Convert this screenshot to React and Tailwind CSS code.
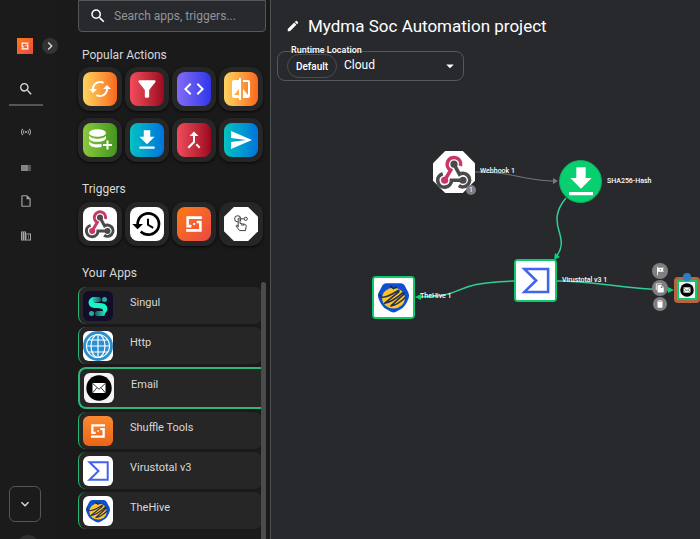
import React from "react";
import {
  MdSearch, MdEdit, MdFilterAlt, MdCode, MdCompare, MdCallMerge, MdSend,
  MdDownload, MdOutlineInsertDriveFile, MdBusiness, MdHistory, MdSensors,
  MdArrowDropDown, MdKeyboardArrowDown, MdKeyboardArrowRight, MdFileCopy,
  MdDelete, MdTour, MdCached,
} from "react-icons/md";

function ShuffleMark({ className }) {
  return (
    <svg viewBox="0 0 24 24" className={className} fill="none" stroke="#fff" strokeWidth="3.4">
      <path d="M22.500 3.500H3.500V14.800H8.500" />
      <path d="M1.500 20.500h19V9.200H15.500" />
      <path d="M10.900 12h2.600" strokeWidth="2.600" />
    </svg>
  );
}

function WebhookMark({ className }) {
  return (
    <svg viewBox="0 0 48 48" className={className} fill="none" strokeWidth="4.8">
      <path d="M9 26.200A9.200 9.200 0 1 0 20.700 35H35" stroke="#4a4a4a" />
      <path d="M24 13.500L31.300 27A9 9 0 1 1 30.500 42" stroke="#4a4a4a" />
      <path d="M32.600 16A9 9 0 1 0 19.600 21.500L11.500 35" stroke="#c9376a" />
      <circle cx="24" cy="13.500" r="4.800" fill="#4a4a4a" />
      <circle cx="36" cy="35" r="4.800" fill="#4a4a4a" />
      <circle cx="11.500" cy="35" r="4.800" fill="#c9376a" />
    </svg>
  );
}

function DatabasePlus({ className }) {
  return (
    <svg viewBox="0 0 24 24" className={className} fill="#fff">
      <ellipse cx="9.5" cy="5" rx="8.5" ry="3.8" />
      <path d="M1 7.5c1 2.5 5 3.2 8.500 3.200S17 10 18 7.500v3c-1 2.500-5 3.300-8.500 3.300S2 13 1 10.500z" />
      <path d="M1 13c1 2.500 5 3.300 8.500 3.300 1.500 0 3-.100 4-.400v3.200c-1.200.300-2.600.400-4 .400C6 19.500 2 18.500 1 16z" />
      <path d="M18.500 12.500h2v3.500H24v2h-3.500v3.500h-2V18H15v-2h3.500z" />
    </svg>
  );
}

function TouchMark({ className }) {
  return (
    <svg viewBox="0 0 34 34" className={className} fill="none" stroke="#333" strokeWidth="1">
      <circle cx="13.500" cy="11.500" r="3.300" />
      <circle cx="22" cy="11.500" r="1.700" />
      <path d="M17 11.500h3" />
      <path d="M14 20v-8.500c0-1.300 2-1.300 2 0v5l5 .800c1.200.300 1.700 1 1.500 2.200l-.800 4.500h-6.200l-3.500-4.500c-.600-1 .600-1.700 1.300-1z" fill="#fff" />
      <path d="M18 17v2M20 17.300V19" />
    </svg>
  );
}

function SingulMark({ className }) {
  return (
    <svg viewBox="0 0 30 30" className={className}>
      <defs>
        <linearGradient id="singul-top"><stop stopColor="#1fe8c0" /><stop offset="1" stopColor="#145a5c" /></linearGradient>
        <linearGradient id="singul-low"><stop stopColor="#145a5c" /><stop offset="1" stopColor="#1fe8c0" /></linearGradient>
      </defs>
      <rect width="30" height="30" fill="#120e2a" />
      <rect x="8" y="6" width="10" height="5" rx="2.500" fill="url(#singul-top)" />
      <circle cx="21.500" cy="8.500" r="2.500" fill="#1fae9c" />
      <path d="M10 6.300C4.500 7.300 4 14.500 9 16.500c3 1.300 7 .300 9.500 1.300 2 .800 2 3.200 1 5.500 6-.800 6.500-8.500 1.500-10.500-3-1.200-7-.200-10-1.500-2-1-2-3-1-5z" fill="#19f5c4" />
      <rect x="12" y="20" width="10" height="5" rx="2.500" fill="url(#singul-low)" />
      <circle cx="8.500" cy="22.500" r="2.500" fill="#1fae9c" />
    </svg>
  );
}

function GlobeMark({ className }) {
  return (
    <svg viewBox="0 0 30 30" className={className} fill="none" stroke="#fff" strokeWidth="1.200">
      <rect width="30" height="30" fill="#fff" stroke="none" />
      <circle cx="15" cy="15" r="15" fill="#2b8fd0" stroke="none" />
      <circle cx="15" cy="15" r="11.500" />
      <ellipse cx="15" cy="15" rx="7" ry="11.500" />
      <path d="M3.500 15h23M5.500 9h19M5.500 21h19M15 3.500v23" />
    </svg>
  );
}

function EnvelopeMark({ className }) {
  return (
    <svg viewBox="0 0 30 30" className={className}>
      <rect width="30" height="30" fill="#f4f4f4" />
      <circle cx="15" cy="15" r="12.700" fill="#000" />
      <rect x="8.500" y="10" width="13" height="10" fill="#fff" />
      <path d="M8.500 10.300l6.500 6 6.500-6M8.500 20l4.500-5.300M21.500 20L17 14.700" fill="none" stroke="#222" strokeWidth=".9" />
    </svg>
  );
}

function VirustotalMark({ className }) {
  return (
    <svg viewBox="0 0 30 30" className={className}>
      <rect width="30" height="30" fill="#fff" />
      <path d="M6.500 6.200h18.200v17.600H6.500L15.500 15z" fill="none" stroke="#4164f0" strokeWidth="2" />
    </svg>
  );
}

function HiveMark({ className }) {
  return (
    <svg viewBox="0 0 30 30" className={className}>
      <rect width="30" height="30" fill="#fff" />
      <path d="M9.500 4h11c1.500 0 2.500.700 3.200 2l2.600 5c.8 1.700.8 3.300.2 5-1 2.600-2.500 5.500-4.500 7l-5 3c-1.300.6-2.700.6-4 0l-5-3c-2-1.500-3.500-4.400-4.500-7-.6-1.700-.6-3.300.2-5l2.600-5C7 4.700 8 4 9.500 4z" fill="#0d4fd0" />
      <ellipse cx="15" cy="15.500" rx="8.700" ry="8" fill="#fcc42c" />
      <path d="M5.500 14.500c2.500 1 8.500-2 12.500-4.500M8 19.500c3.500-.5 9.500-4 14-8M13 21.500c3.500-.5 7.500-3 11-6.500M5.500 14.500L4 12.500M18 10c1-.8 1.600-.6 1 .7L8 19.500M22 11.500c1.200-.5 1.500.3.600 1.300L13 21.500" fill="none" stroke="#26304a" strokeWidth="1.200" strokeLinecap="round" />
      <path d="M12.500 6l2.500 2.200L17.500 7" fill="none" stroke="#1b2540" strokeWidth="1.200" />
    </svg>
  );
}

function DownloadMark({ className }) {
  return (
    <svg viewBox="0 0 24 24" className={className} fill="#fff">
      <path d="M8.500 1h7v8H20l-8 8-8-8h4.500zM3 19.500h18v2.500H3z" />
    </svg>
  );
}

const actions = [
  { label: "Repeat", tint: "from-[#fbd45e] to-[#f8671c]", icon: <MdCached className="size-6" /> },
  { label: "Filter", tint: "from-[#f34c5c] to-[#9c0620]", icon: <MdFilterAlt className="size-[26px]" /> },
  { label: "Code", tint: "from-[#836af5] to-[#3034ea]", icon: <MdCode className="size-6" /> },
  { label: "Compare", tint: "from-[#fbd45e] to-[#f8671c]", icon: <MdCompare className="size-6" /> },
  { label: "Store", tint: "from-[#89c93c] to-[#459420]", icon: <DatabasePlus className="size-6" /> },
  { label: "Download", tint: "from-[#0cc2c0] to-[#0871dc]", icon: <MdDownload className="size-[26px]" /> },
  { label: "Merge", tint: "from-[#f34c5c] to-[#9c0620]", icon: <MdCallMerge className="size-6" /> },
  { label: "Send", tint: "from-[#0cc2c0] to-[#0871dc]", icon: <MdSend className="size-6" /> },
];

const triggers = [
  { label: "Webhook", look: "rounded-lg bg-white", icon: <WebhookMark className="size-[30px]" /> },
  { label: "Schedule", look: "rounded-lg bg-white text-black", icon: <MdHistory className="size-8 shrink-0" /> },
  { label: "Subflow", look: "rounded-lg bg-linear-to-br from-[#ff7a00] to-[#e8483f]", icon: <ShuffleMark className="size-[18px]" /> },
  { label: "User input", look: "bg-white [clip-path:polygon(29%_0,71%_0,100%_29%,100%_71%,71%_100%,29%_100%,0_71%,0_29%)]", icon: <TouchMark className="size-8" /> },
];

const apps = [
  { name: "Singul", icon: <SingulMark className="size-full" /> },
  { name: "Http", icon: <GlobeMark className="size-full" /> },
  { name: "Email", icon: <EnvelopeMark className="size-full" />, selected: true },
  { name: "Shuffle Tools", icon: <span className="flex size-full items-center justify-center bg-linear-to-b from-[#fb8a30] to-[#ea6418]"><ShuffleMark className="size-4" /></span> },
  { name: "Virustotal v3", icon: <VirustotalMark className="size-full" /> },
  { name: "TheHive", icon: <HiveMark className="size-full" /> },
];

function Tile({ label, children }) {
  return (
    <button type="button" aria-label={label} className="flex size-11 items-center justify-center rounded-xl bg-[#262626] shadow-sm shadow-black/60">
      {children}
    </button>
  );
}

function Rail() {
  return (
    <nav className="flex w-[54px] shrink-0 flex-col items-center bg-[#1b1b1b] pr-0.5 text-[#a4a4a4]">
      <div className="mt-[38px] flex w-full items-center pl-[17px]">
        <span className="flex size-4 shrink-0 items-center justify-center bg-linear-to-br from-[#ff7a00] to-[#e8483f]">
          <ShuffleMark className="size-2" />
        </span>
        <button type="button" aria-label="Expand menu" className="relative z-10 -mr-4 ml-[9px] flex size-4 shrink-0 items-center justify-center rounded-full bg-[#333] text-[#ddd]">
          <MdKeyboardArrowRight className="size-4 shrink-0" />
        </button>
      </div>
      <button type="button" aria-label="Search" className="mt-[27px] flex h-[25px] w-[34px] justify-center border-b-2 border-[#555] text-[#ddd]">
        <MdSearch className="size-4" />
      </button>
      <button type="button" aria-label="Live" className="mt-5"><MdSensors className="size-3" /></button>
      <button type="button" aria-label="Dashboard" className="mt-6">
        <svg viewBox="0 0 12 12" className="size-3"><rect x="1" y="3" width="7" height="6" fill="#858585" /><rect x="8" y="3" width="3" height="6" fill="#555" /></svg>
      </button>
      <button type="button" aria-label="Documents" className="mt-5"><MdOutlineInsertDriveFile className="size-[14px]" /></button>
      <button type="button" aria-label="Organization" className="mt-[22px]"><MdBusiness className="size-3" /></button>
      <button type="button" aria-label="More" className="mt-auto mr-0.5 flex h-9 w-8 shrink-0 items-center justify-center rounded-md border border-[#555] text-[#ddd]">
        <MdKeyboardArrowDown className="size-4" />
      </button>
      <div className="mt-[13px] -mb-5 ml-1 size-6 shrink-0 rounded-full bg-[#303030]" />
    </nav>
  );
}

function AppsPanel() {
  return (
    <aside className="flex w-[217px] shrink-0 flex-col border-r border-[#505153] bg-[#1a1a1a] pl-6 text-xs text-[#d8d8d8]">
      <label className="flex h-8 w-[188px] shrink-0 items-center gap-[7px] rounded-b border border-[#55565a] bg-[#27292d] pl-[10px]">
        <MdSearch className="size-[18px] shrink-0 text-white" />
        <input aria-label="Search apps" placeholder="Search apps, triggers..." className="w-full min-w-0 bg-transparent outline-none placeholder:text-[#929497]" />
      </label>
      <h2 className="mt-[15px] ml-1 h-5 leading-4">Popular Actions</h2>
      <div className="flex w-[188px] flex-wrap gap-x-[3px] gap-y-[7px]">
        {actions.map((a) => (
          <Tile key={a.label} label={a.label}>
            <span className={`flex size-[34px] items-center justify-center rounded-lg bg-linear-to-r text-white ${a.tint}`}>{a.icon}</span>
          </Tile>
        ))}
      </div>
      <h2 className="mt-[19px] ml-1 h-[21px] leading-4">Triggers</h2>
      <div className="flex w-[188px] gap-[3px]">
        {triggers.map((t) => (
          <Tile key={t.label} label={t.label}>
            <span className={`flex size-[34px] items-center justify-center ${t.look}`}>{t.icon}</span>
          </Tile>
        ))}
      </div>
      <h2 className="mt-[19px] ml-1 h-[17px] leading-4">Your Apps</h2>
      <div className="flex min-h-0 w-[188px] flex-1">
        <ul className="flex flex-1 flex-col gap-[3px] overflow-hidden pt-[5px] text-[11px]">
          {apps.map((app) => (
            <li key={app.name} className="-mr-px">
              <button
                type="button"
                className={`flex w-full items-center bg-[#262626] pl-1 text-left ${app.selected ? "h-[42px] rounded-l-lg border-2 border-r-0 border-[#2bb673]" : "h-[37px] rounded-lg border-l border-[#2bb673]"}`}
              >
                <span className="size-[30px] shrink-0 overflow-hidden rounded-md">{app.icon}</span>
                <span className="mb-[5px] ml-[17px]">{app.name}</span>
              </button>
            </li>
          ))}
        </ul>
        <div className="w-[5px] rounded-t bg-[#4b4b4b]" />
      </div>
    </aside>
  );
}

function Edges() {
  return (
    <svg className="absolute inset-0 size-full" fill="none">
      <path d="M203 172C225 172 235 174 245 176S270 181 283 181" stroke="#77797c" />
      <path d="M282 178l5 3-5 3z" fill="#77797c" />
      <g stroke="#2ecf96" strokeWidth="1.500">
        <path d="M295 198C284 211 285 221 288 231S292 248 285 257" />
        <path d="M243 281C175 283 200 296 149 297" />
        <path d="M286 281C325 281 350 289 398 290" />
      </g>
      <g fill="#0ed072">
        <path d="M283 260l1-7 5 4z" />
        <path d="M144 297l6-3v6z" />
        <path d="M403 290l-6-3v6z" />
      </g>
    </svg>
  );
}

function NodeLabel({ className, children }) {
  return <span className={`absolute text-[7px] leading-[10px] font-medium whitespace-nowrap text-white ${className}`}>{children}</span>;
}

function Canvas() {
  return (
    <main className="relative min-w-0 flex-1 overflow-hidden bg-[#27292d] text-white">
      <Edges />
      <header className="flex items-center gap-2 pt-[14px] pl-[15px]">
        <button type="button" aria-label="Rename workflow"><MdEdit className="size-[14px]" /></button>
        <h1 className="text-[17px] leading-6">Mydma Soc Automation project</h1>
      </header>
      <div className="relative mt-[13px] ml-[6px] flex h-[30px] w-[187px] items-center rounded-lg border border-[#55575b] pl-[9px]">
        <label htmlFor="runtime" className="absolute -top-[8px] left-[13px] text-[9px] leading-3 font-medium">Runtime Location</label>
        <span className="flex h-6 w-[50px] shrink-0 items-center justify-center rounded-full border border-[#4b4d51] text-[10px] font-medium">Default</span>
        <select id="runtime" className="h-full flex-1 appearance-none bg-transparent pb-0.5 pl-[7px] text-xs outline-none">
          <option>Cloud</option>
        </select>
        <MdArrowDropDown className="pointer-events-none absolute right-1 size-[18px]" />
      </div>

      <div className="absolute top-[151px] left-[162px] flex size-[42px] items-center justify-center bg-white [clip-path:polygon(29%_0,71%_0,100%_29%,100%_71%,71%_100%,29%_100%,0_71%,0_29%)]">
        <WebhookMark className="size-9" />
      </div>
      <span className="absolute top-[185px] left-[195px] flex size-[10px] items-center justify-center rounded-full bg-[#7d7d7d] text-[7px]">1</span>
      <NodeLabel className="top-[166px] left-[209px]">Webhook 1</NodeLabel>

      <div className="absolute top-[160px] left-[288px] flex size-[43px] items-center justify-center rounded-full border border-[#0fae5e] bg-[#08cf70]">
        <DownloadMark className="size-8" />
      </div>
      <NodeLabel className="top-[176px] left-[336px]">SHA256-Hash</NodeLabel>

      <div className="absolute top-[259px] left-[243px] size-[43px] overflow-hidden rounded border-2 border-[#0ec96d] bg-white">
        <VirustotalMark className="size-full" />
      </div>
      <NodeLabel className="top-[275px] left-[291px]">Virustotal v3 1</NodeLabel>

      <div className="absolute top-[276px] left-[101px] size-[43px] overflow-hidden rounded border-2 border-[#0ec96d] bg-white">
        <HiveMark className="size-full" />
      </div>
      <NodeLabel className="top-[291px] left-[149px]">TheHive 1</NodeLabel>

      <button type="button" aria-label="Set as start" className="absolute top-[263px] left-[381px] flex size-4 items-center justify-center rounded-full bg-[#7f7f7f]"><MdTour className="size-[10px]" /></button>
      <button type="button" aria-label="Copy" className="absolute top-[280px] left-[381px] flex size-4 items-center justify-center rounded-full bg-[#7f7f7f]"><MdFileCopy className="size-[10px]" /></button>
      <button type="button" aria-label="Delete" className="absolute top-[297px] left-[382px] flex size-[14px] items-center justify-center rounded-full bg-[#7f7f7f]"><MdDelete className="size-[10px]" /></button>
      <div className="absolute top-[277px] left-[403px] size-[26px] rounded bg-[#b5653f] p-[3px]">
        <div className="size-full border-2 border-[#0ec96d]"><EnvelopeMark className="size-full" /></div>
      </div>
      <span className="absolute top-[273px] left-[412px] size-2 rounded-full bg-[#2f7dc4]" />
    </main>
  );
}

export default function App() {
  return (
    <div className="flex h-screen overflow-hidden bg-[#1a1a1a] font-[Roboto,sans-serif]">
      <Rail />
      <AppsPanel />
      <Canvas />
    </div>
  );
}
